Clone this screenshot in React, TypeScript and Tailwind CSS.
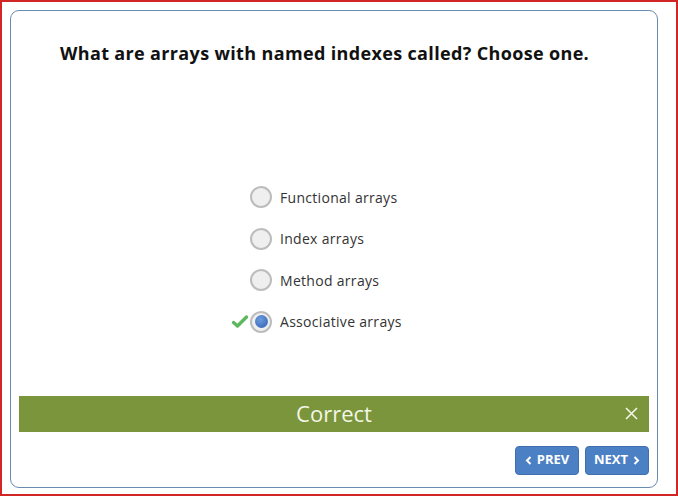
import React from 'react';

const options = ['Functional arrays', 'Index arrays', 'Method arrays', 'Associative arrays'];

const Radio = ({ checked }: { checked: boolean }) => (
  <span className="w-[22px] h-[22px] rounded-full border-2 border-[#bcbcbc] bg-[#efefef] flex items-center justify-center">
    {checked && (
      <span className="w-[13px] h-[13px] rounded-full bg-[radial-gradient(circle_at_40%_35%,#6d9be0,#2f5fae)]" />
    )}
  </span>
);

const Check = () => (
  <svg width="16" height="13" viewBox="0 0 16 13">
    <path d="M1.5 7.5 L5.5 11 L14.5 2" fill="none" stroke="#5cb85c" strokeWidth="3.4" strokeLinecap="round" strokeLinejoin="round" />
  </svg>
);

export default function App() {
  return (
    <div className="w-[678px] h-[496px] border-2 border-[#d22525] bg-white font-['Open_Sans',sans-serif]">
      <div className="ml-[8px] mt-[8px] w-[648px] h-[478px] border border-[#6a8bb0] rounded-[9px] flex flex-col">
        <h1 className="pl-[49px] pt-[29px] text-[18px] leading-[26px] font-bold text-[#111] tracking-[0.35px]">
          What are arrays with named indexes called? Choose one.
        </h1>

        <div className="mt-[120px] flex flex-col gap-[19.5px] pl-[221px]">
          {options.map((o, i) => (
            <div key={o} className="flex items-center h-[22px]">
              <span className="w-[18px] flex justify-start">{i === 3 && <Check />}</span>
              <Radio checked={i === 3} />
              <span className="ml-[8px] text-[14px] text-[#333] tracking-[0.3px]">{o}</span>
            </div>
          ))}
        </div>

        <div className="mt-[63px] mx-[8px] h-[36px] bg-[#7a953b] relative flex items-center justify-center">
          <span className="text-[22px] font-normal text-[#f4f6e6]">Correct</span>
          <svg className="absolute right-[11px] top-[11px]" width="13" height="13" viewBox="0 0 13 13">
            <path d="M1 1 L12 12 M12 1 L1 12" stroke="#f4f6e6" strokeWidth="1.6" />
          </svg>
        </div>

        <div className="mt-[14px] mr-[8px] flex justify-end gap-[6px]">
          <button className="w-[64px] h-[29px] rounded-[4px] bg-[#4c80c4] border border-[#3f6fae] text-white text-[13px] font-bold flex items-center justify-center gap-[5px]">
            <svg width="7" height="9" viewBox="0 0 7 9"><path d="M5.5 1 L2 4.5 L5.5 8" fill="none" stroke="white" strokeWidth="2" /></svg>
            PREV
          </button>
          <button className="w-[64px] h-[29px] rounded-[4px] bg-[#4c80c4] border border-[#3f6fae] text-white text-[13px] font-bold flex items-center justify-center gap-[5px]">
            NEXT
            <svg width="7" height="9" viewBox="0 0 7 9"><path d="M1.5 1 L5 4.5 L1.5 8" fill="none" stroke="white" strokeWidth="2" /></svg>
          </button>
        </div>
      </div>
    </div>
  );
}
